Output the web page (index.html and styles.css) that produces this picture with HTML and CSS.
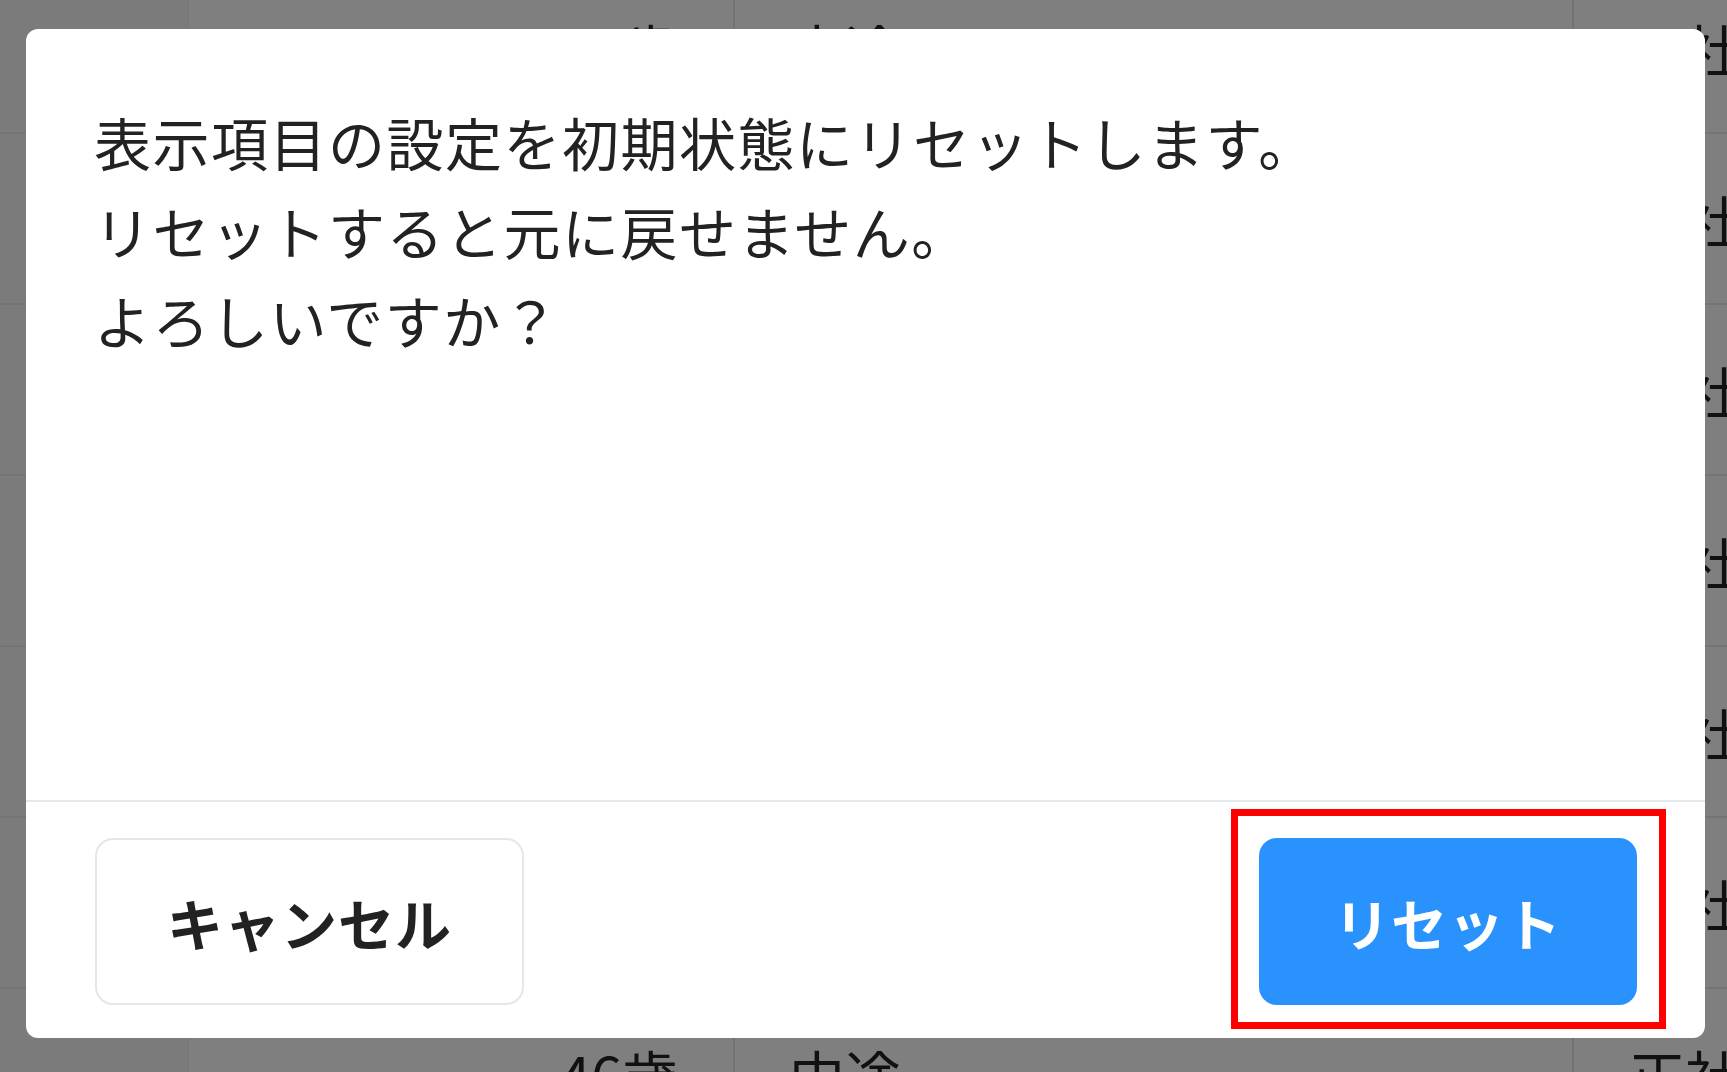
FILE: index.html
```html
<!DOCTYPE html>
<html lang="ja">
<head>
<meta charset="utf-8">
<title>リセット確認</title>
<link rel="stylesheet" href="styles.css">
</head>
<body>
<div class="page">
  <div class="table">
    <div class="row"><div class="cell c1"></div><div class="cell c2">38歳</div><div class="cell c3">中途</div><div class="cell c4">正社員</div></div>
    <div class="row"><div class="cell c1"></div><div class="cell c2">29歳</div><div class="cell c3">新卒</div><div class="cell c4">正社員</div></div>
    <div class="row"><div class="cell c1"></div><div class="cell c2">41歳</div><div class="cell c3">中途</div><div class="cell c4">正社員</div></div>
    <div class="row"><div class="cell c1"></div><div class="cell c2">35歳</div><div class="cell c3">中途</div><div class="cell c4">正社員</div></div>
    <div class="row"><div class="cell c1"></div><div class="cell c2">27歳</div><div class="cell c3">新卒</div><div class="cell c4">正社員</div></div>
    <div class="row"><div class="cell c1"></div><div class="cell c2">52歳</div><div class="cell c3">中途</div><div class="cell c4">正社員</div></div>
    <div class="row"><div class="cell c1"></div><div class="cell c2">46歳</div><div class="cell c3">中途</div><div class="cell c4">正社員</div></div>
  </div>
  <div class="overlay"></div>
  <div class="modal" role="dialog">
    <div class="modal-body">
      <p class="message">表示項目の設定を初期状態にリセットします。<br>リセットすると元に戻せません。<br>よろしいですか？</p>
    </div>
    <div class="modal-footer">
      <button class="btn btn-cancel" type="button">キャンセル</button>
      <span class="highlight"><button class="btn btn-reset" type="button">リセット</button></span>
    </div>
  </div>
</div>
</body>
</html>
```
FILE: styles.css
```css
* { box-sizing: border-box; }
html, body {
  margin: 0;
  padding: 0;
  width: 1727px;
  height: 1072px;
  overflow: hidden;
  background: #ffffff;
  font-family: "Noto Sans CJK JP", "Noto Sans", sans-serif;
}
.page {
  position: relative;
  width: 1727px;
  height: 1072px;
  overflow: hidden;
}
.table {
  margin-top: -37px;
  display: flex;
  flex-direction: column;
}
.row {
  display: grid;
  grid-template-columns: 189px 546px 839px 1fr;
  height: 171px;
  border-bottom: 2px solid #e8e8e8;
}
.cell {
  display: flex;
  align-items: center;
  font-size: 56px;
  color: #222222;
  white-space: nowrap;
  overflow: hidden;
  min-width: 0;
}
.c1 {
  background: #f7f7f7;
  border-right: 1px solid #eeeeee;
}
.c2 {
  justify-content: flex-end;
  padding-right: 55px;
  border-right: 2px solid #e0e6ee;
}
.c3 {
  padding-left: 54px;
  border-right: 2px solid #e0e6ee;
}
.c4 {
  padding-left: 55px;
}
.overlay {
  position: absolute;
  inset: 0;
  background: rgba(0, 0, 0, 0.5);
}
.modal {
  position: absolute;
  left: 26px;
  top: 29px;
  width: 1679px;
  height: 1009px;
  background: #ffffff;
  border-radius: 12px;
  display: flex;
  flex-direction: column;
}
.modal-body {
  flex: 1;
  padding: 68px 68px 0 68px;
}
.message {
  margin: 0;
  font-size: 57px;
  line-height: 89px;
  letter-spacing: 1.5px;
  color: #222222;
  font-weight: 400;
}
.modal-footer {
  border-top: 2px solid #e4e9ef;
  padding: 36px 68px 33px 69px;
  display: flex;
  justify-content: space-between;
  align-items: center;
}
.btn {
  height: 167px;
  border-radius: 18px;
  font-family: "Noto Sans CJK JP", "Noto Sans", sans-serif;
  font-size: 56px;
  font-weight: 700;
  letter-spacing: 1px;
  display: flex;
  align-items: center;
  justify-content: center;
  padding: 0;
  margin: 0;
}
.btn-cancel {
  width: 429px;
  background: #ffffff;
  border: 2px solid #e2e7ed;
  color: #222222;
}
.btn-reset {
  width: 378px;
  background: #2a92fd;
  border: none;
  color: #ffffff;
}
.highlight {
  position: relative;
  display: block;
}
.highlight::after {
  content: "";
  position: absolute;
  left: -28px;
  right: -29px;
  top: -29px;
  bottom: -24px;
  border: 7px solid #ff0000;
  pointer-events: none;
}
```
